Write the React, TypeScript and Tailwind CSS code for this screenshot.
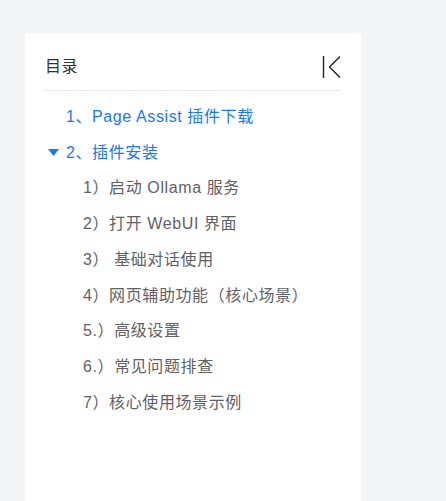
import React from "react";

const subs = [
  "1）启动 Ollama 服务",
  "2）打开 WebUI 界面",
  "3） 基础对话使用",
  "4）网页辅助功能（核心场景）",
  "5.）高级设置",
  "6.）常见问题排查",
  "7）核心使用场景示例",
];

export default function App() {
  return (
    <div
      className="w-[446px] h-[501px] overflow-hidden bg-[#f4f5f7] pl-[25px] pt-[33px]"
      style={{ fontFamily: '"Liberation Sans", "Noto Sans CJK SC", sans-serif' }}
    >
      <div className="w-[336px] h-[520px] bg-white rounded-t-[4px] px-[19px] pt-[21px]">
        <div className="flex items-center justify-between h-[26px] pl-[1px]">
          <span className="text-[16px] tracking-[0.6px] text-[#303133]">目录</span>
          <svg width="22" height="24" viewBox="0 0 22 24" className="mr-[0px]">
            <line x1="3.5" y1="1" x2="3.5" y2="23" stroke="#222" strokeWidth="1.4" />
            <polyline points="20,1.5 9.5,12 20,22.5" fill="none" stroke="#222" strokeWidth="1.4" />
          </svg>
        </div>
        <div className="mt-[10px] border-b border-[#e6e7ea]" />
        <div className="pt-[8px]">
          <div className="h-[35.75px] flex items-center pl-[22px] text-[16px] tracking-[0.6px] text-[#1677ff]">
            1、Page Assist 插件下载
          </div>
          <div className="h-[35.75px] flex items-center pl-[4px] text-[16px] tracking-[0.6px] text-[#1677ff]">
            <svg width="11" height="7" viewBox="0 0 11 7" className="mr-[7px]">
              <polygon points="0,0 11,0 5.5,7" fill="#1677ff" />
            </svg>
            2、插件安装
          </div>
          {subs.map((s) => (
            <div
              key={s}
              className="h-[35.75px] flex items-center pl-[39px] text-[16px] tracking-[0.6px] text-[#5f6166]"
            >
              {s}
            </div>
          ))}
        </div>
      </div>
    </div>
  );
}
